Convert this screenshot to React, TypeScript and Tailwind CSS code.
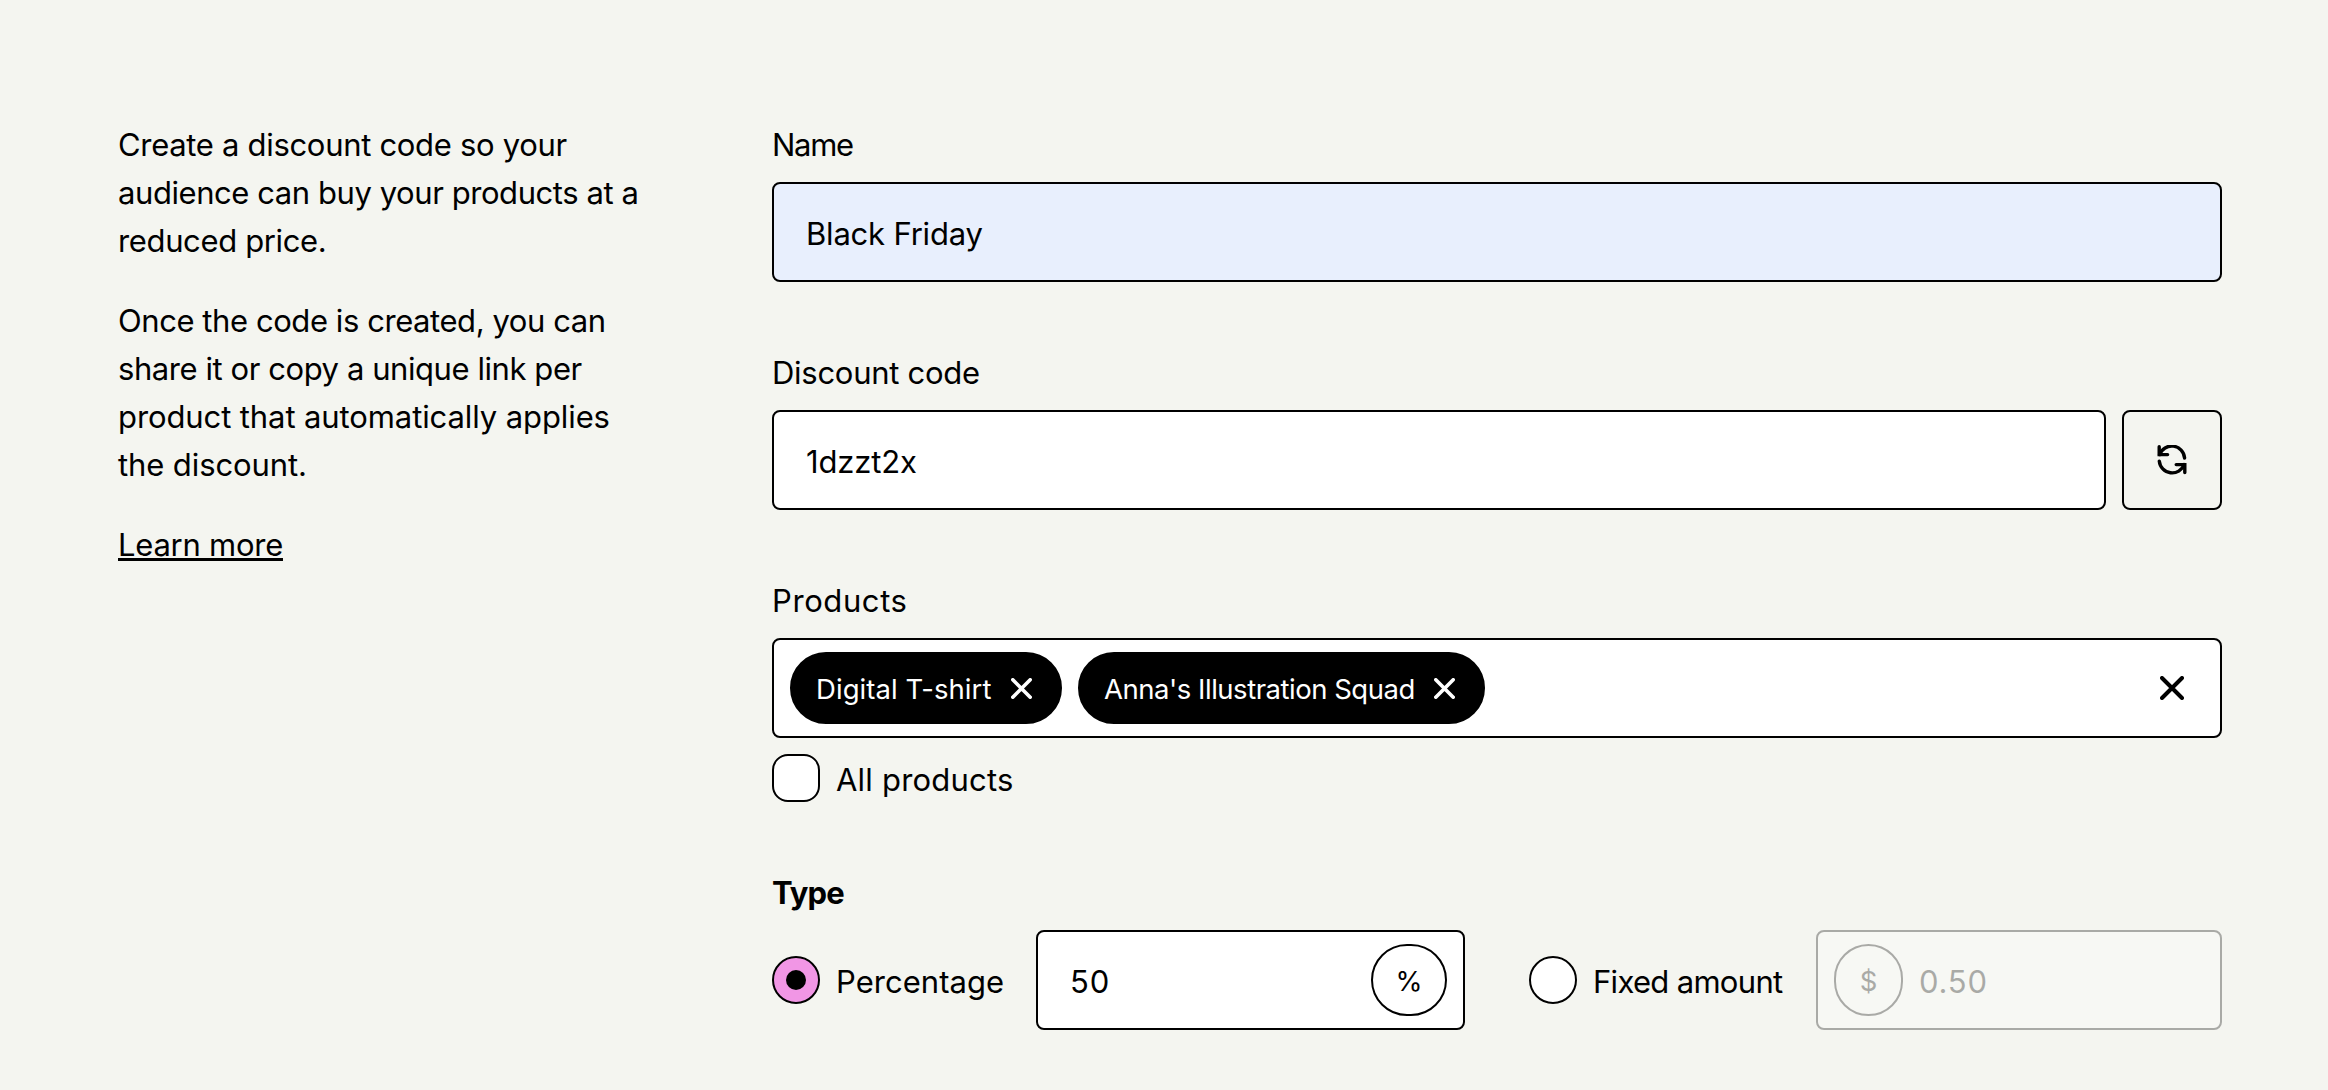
import React from "react";

function Cross({ size, stroke }: { size: number; stroke: number }) {
  const a = stroke / 2;
  const b = size - a;
  return (
    <svg width={size} height={size} viewBox={`0 0 ${size} ${size}`} fill="none" stroke="currentColor" strokeWidth={stroke} strokeLinecap="round">
      <path d={`M${a} ${a}L${b} ${b}M${b} ${a}L${a} ${b}`} />
    </svg>
  );
}

function RefreshIcon() {
  return (
    <svg width="30" height="30" viewBox="0 0 30 30" fill="none" stroke="currentColor" strokeWidth="3.4" strokeLinecap="round" strokeLinejoin="miter">
      <path d="M2.6 9.6A12.9 12.9 0 0 1 27.6 13" />
      <path d="M2.3 16.2A12.9 12.9 0 0 0 27.2 19.6" />
      <path d="M2.2 1.8V9.6H10.6" />
      <path d="M27.8 27.6V19.6H19.2" />
    </svg>
  );
}

function Label({ children, className = "" }: { children: React.ReactNode; className?: string }) {
  return <div className={`mb-4 h-12 pt-[5px] leading-[44px] ${className}`}>{children}</div>;
}

function Chip({ text, className }: { text: string; className: string }) {
  return (
    <div className={`flex h-[72px] items-center justify-between rounded-full border-2 border-black bg-black pl-6 pr-6 text-white ${className}`}>
      <span className="whitespace-nowrap pt-[2px] text-[27.5px] leading-9">{text}</span>
      <button className="flex h-7 w-[29px] items-center justify-center" aria-label={`Remove ${text}`}>
        <Cross size={21} stroke={3.6} />
      </button>
    </div>
  );
}

const box = "flex h-[100px] items-center rounded-lg border-2 border-black";

export default function App() {
  return (
    <main className="flex h-[1090px] w-[2328px] gap-[132px] overflow-hidden bg-[#f4f5f0] pl-[118px] pt-[118px] font-['Inter',sans-serif] text-[31px] text-black">
      <aside className="flex w-[522px] shrink-0 flex-col gap-8 whitespace-nowrap pt-[3px] leading-[48px]">
        <p>
          <span className="block tracking-[-0.31px]">Create a discount code so your</span>
          <span className="block tracking-[-0.43px]">audience can buy your products at a</span>
          <span className="block tracking-[-0.36px]">reduced price.</span>
        </p>
        <p>
          <span className="block tracking-[-0.43px]">Once the code is created, you can</span>
          <span className="block tracking-[-0.43px]">share it or copy a unique link per</span>
          <span className="block tracking-[-0.1px]">product that automatically applies</span>
          <span className="block tracking-[-0.1px]">the discount.</span>
        </p>
        <p>
          <a className="tracking-[-0.25px] underline decoration-[3px] underline-offset-[2px] [text-decoration-skip-ink:none]">Learn more</a>
        </p>
      </aside>

      <form className="flex w-[1450px] shrink-0 flex-col gap-16">
        <section>
          <Label className="tracking-[-1.31px]">Name</Label>
          <div className={`${box} bg-[#e8effd] px-8`}>
            <span className="pt-[5px] tracking-[-0.2px]">Black Friday</span>
          </div>
        </section>

        <section>
          <Label className="tracking-[-0.28px]">Discount code</Label>
          <div className="flex gap-4">
            <div className={`${box} flex-1 bg-white px-8`}>
              <span className="pt-[5px] tracking-[-0.15px]">1dzzt2x</span>
            </div>
            <button type="button" className={`${box} w-[100px] justify-center`} aria-label="Generate new code">
              <RefreshIcon />
            </button>
          </div>
        </section>

        <section>
          <Label className="tracking-[0.6px]">Products</Label>
          <div className={`${box} gap-4 bg-white pl-4`}>
            <Chip text="Digital T-shirt" className="w-[272px] tracking-[0.06px]" />
            <Chip text="Anna's Illustration Squad" className="w-[407px] tracking-[-0.48px]" />
            <button type="button" className="ml-auto mr-9 text-black" aria-label="Clear all">
              <Cross size={24} stroke={4} />
            </button>
          </div>
          <label className="mt-4 flex h-12 items-center gap-4">
            <span className="h-12 w-12 rounded-2xl border-2 border-black bg-white" />
            <span className="pt-[5px] tracking-[0.21px]">All products</span>
          </label>
        </section>

        <section>
          <Label className="font-bold tracking-[-0.9px]">Type</Label>
          <div className="flex items-center">
            <label className="flex w-[264px] items-center gap-4">
              <span className="flex h-12 w-12 items-center justify-center rounded-full border-2 border-black bg-[#f196e5]">
                <span className="h-5 w-5 rounded-full bg-black" />
              </span>
              <span className="pt-[5px] tracking-[0.04px]">Percentage</span>
            </label>
            <div className={`${box} w-[429px] justify-between bg-white pl-8 pr-4`}>
              <span className="pt-[5px] tracking-[1px]">50</span>
              <span className="flex h-[72px] w-[76px] items-center justify-center rounded-full border-2 border-black pt-[3px] text-[27.5px]">%</span>
            </div>
            <label className="ml-16 flex w-[287px] items-center gap-4">
              <span className="h-12 w-12 shrink-0 rounded-full border-2 border-black bg-white" />
              <span className="whitespace-nowrap pt-[5px] tracking-[-0.69px]">Fixed amount</span>
            </label>
            <div className={`${box} w-[406px] gap-4 bg-white pl-4 opacity-30`}>
              <span className="flex h-[72px] w-[69px] items-center justify-center rounded-full border-2 border-black pt-[3px] text-[27.5px]">$</span>
              <span className="pt-[5px] tracking-[0.8px]">0.50</span>
            </div>
          </div>
        </section>
      </form>
    </main>
  );
}
